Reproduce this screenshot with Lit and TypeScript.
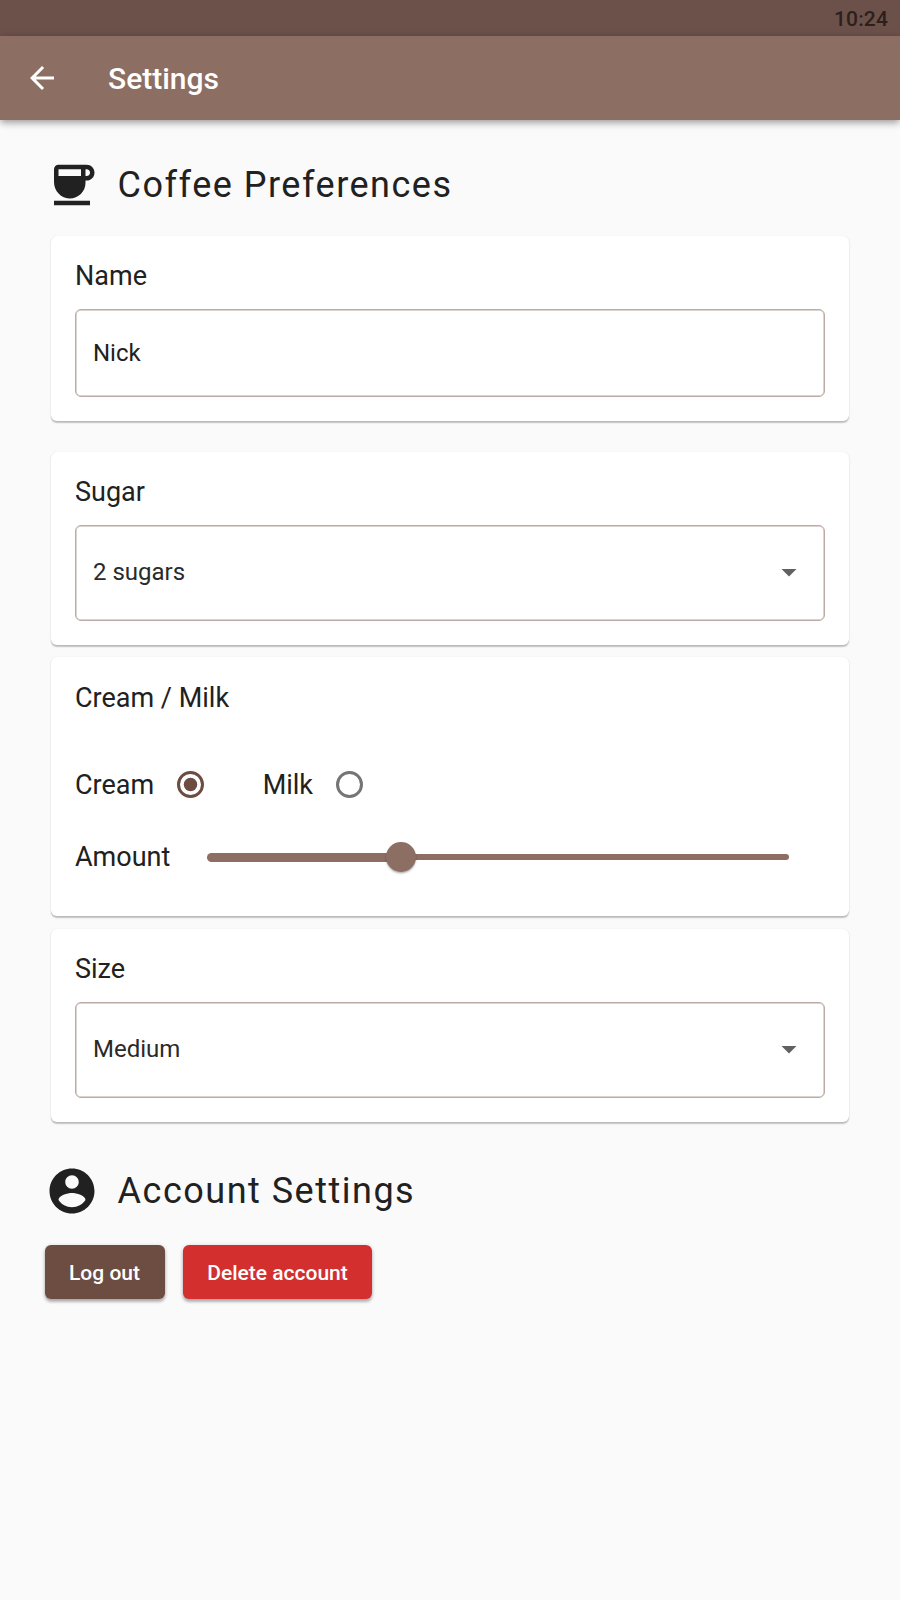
import { LitElement, html, css, svg } from "lit";
import { customElement, property, state } from "lit/decorators.js";

@customElement("select-box")
class SelectBox extends LitElement {
  @property() value = "";

  static styles = css`
    :host {
      display: flex;
      align-items: center;
      justify-content: space-between;
      height: 96px;
      padding: 0 18px;
      box-sizing: border-box;
      border-radius: 6px;
      border: 1px solid #bcaaa4;
      box-shadow: inset 0 0 0 0.5px #bcaaa4;
      font-size: 24px;
    }
    svg {
      width: 36px;
      height: 36px;
      fill: #616161;
      margin: -2px -1px 0 0;
    }
    .value {
      margin-left: -1px;
      color: #2a2a2a;
      line-height: 28px;
      margin-top: -2px;
    }
  `;

  render() {
    return html`<span class="value">${this.value}</span>
      <svg viewBox="0 0 24 24"><path d="M7 10l5 5 5-5z" /></svg>`;
  }
}

@customElement("radio-dot")
class RadioDot extends LitElement {
  @property({ type: Boolean }) checked = false;

  static styles = css`
    :host {
      display: block;
      width: 27px;
      height: 27px;
    }
    svg {
      display: block;
      width: 27px;
      height: 27px;
      fill: none;
      stroke: #757575;
      stroke-width: 3;
    }
    .on {
      stroke: #6d4c41;
    }
    .dot {
      fill: #6d4c41;
      stroke: none;
    }
  `;

  render() {
    return html`<svg class=${this.checked ? "on" : ""} viewBox="0 0 27 27">
      <circle cx="13.5" cy="13.5" r="12" />
      ${this.checked ? svg`<circle class="dot" cx="13.5" cy="13.5" r="6.75" />` : null}
    </svg>`;
  }
}

@customElement("app-root")
class AppRoot extends LitElement {
  @state() amount = 1 / 3;

  static styles = css`
    :host {
      display: flex;
      flex-direction: column;
      height: 1600px;
      background: #fafafa;
      color: #212121;
      font-family: Roboto, "Liberation Sans", sans-serif;
      box-sizing: border-box;
    }
    .status {
      height: 36px;
      flex: none;
      display: flex;
      align-items: center;
      justify-content: flex-end;
      padding: 2px 12px 0 0;
      box-sizing: border-box;
      background: #6b5149;
      color: #2b201d;
      font-size: 21px;
      font-weight: 500;
      letter-spacing: 0.15px;
    }
    .bar {
      height: 84px;
      flex: none;
      display: flex;
      align-items: center;
      padding-left: 24px;
      gap: 48px;
      background: #8d6e63;
      color: #fff;
      box-shadow: 0 3px 6px -1px rgba(0, 0, 0, 0.22), 0 4px 8px rgba(0, 0, 0, 0.12),
        0 1px 10px rgba(0, 0, 0, 0.1);
    }
    .bar svg {
      width: 36px;
      height: 36px;
      fill: #fff;
    }
    .bar .title {
      padding-top: 2px;
      font-size: 30px;
      font-weight: 500;
      line-height: 36px;
    }
    .heading {
      display: flex;
      align-items: center;
      gap: 18.6px;
      height: 54px;
      padding-left: 45px;
      font-size: 36px;
      letter-spacing: 1.5px;
      white-space: nowrap;
    }
    .heading svg {
      width: 54px;
      height: 54px;
      fill: #212121;
    }
    .coffee {
      margin-top: 37.5px;
    }
    .account {
      margin-top: 42px;
    }
    .card {
      margin: 0 51px;
      padding: 24px;
      box-sizing: border-box;
      border-radius: 6px;
      background: #fff;
      box-shadow: 0 1.5px 1.5px rgba(0, 0, 0, 0.22), 0 0.5px 1.5px rgba(0, 0, 0, 0.06);
      font-size: 27px;
    }
    .label {
      line-height: 32px;
      margin-bottom: 17px;
    }
    .name {
      margin-top: 24.5px;
      height: 185px;
    }
    .sugar {
      margin-top: 31px;
      height: 193px;
    }
    .milk {
      margin-top: 12px;
      padding-top: 25px;
      height: 259px;
    }
    .size {
      margin-top: 13px;
      height: 193px;
    }
    .field {
      display: flex;
      align-items: center;
      height: 88px;
      padding: 0 17px 1px;
      box-sizing: border-box;
      border: 1px solid #bcaaa4;
      border-radius: 6px;
      box-shadow: inset 0 0 0 0.5px #bcaaa4;
      font-size: 24px;
    }
    .choices {
      display: flex;
      align-items: center;
      height: 32px;
      margin-top: 54px;
    }
    .choices span {
      padding-top: 2px;
    }
    .choices radio-dot {
      margin-left: 23px;
    }
    .choices .second {
      margin-left: 58.5px;
    }
    .amount {
      display: flex;
      align-items: center;
      height: 32px;
      margin-top: 41px;
    }
    .slider {
      flex: none;
      width: 582px;
      height: 36px;
      margin-left: 37px;
      display: flex;
      align-items: center;
    }
    .filled {
      height: 9px;
      border-radius: 4.5px 0 0 4.5px;
      background: #8d6e63;
    }
    .rest {
      flex: 1;
      height: 6px;
      border-radius: 0 3px 3px 0;
      background: #8d6e63;
    }
    .thumb {
      flex: none;
      width: 30px;
      height: 30px;
      margin: 0 -15px;
      border-radius: 50%;
      background: #8d6e63;
      box-shadow: 0 1.5px 2px rgba(0, 0, 0, 0.3);
      z-index: 1;
    }
    .buttons {
      display: flex;
      gap: 18px;
      margin: 27px 0 0 45px;
    }
    button {
      height: 54px;
      padding: 2px 0 0;
      border: 0;
      border-radius: 6px;
      color: #fff;
      font: 500 21px Roboto, sans-serif;
      box-shadow: 0 3px 3px rgba(0, 0, 0, 0.22), 0 1px 4px rgba(0, 0, 0, 0.2);
    }
    .logout {
      width: 120px;
      padding-right: 1px;
      background: #6d4c41;
    }
    .delete {
      width: 189px;
      background: #d32f2f;
    }
  `;

  render() {
    return html`
      <div class="status"><span>10:24</span></div>
      <header class="bar">
        <svg viewBox="0 0 24 24">
          <path d="M20 11H7.83l5.59-5.59L12 4l-8 8 8 8 1.41-1.41L7.83 13H20v-2z" />
        </svg>
        <span class="title">Settings</span>
      </header>

      <div class="heading coffee">
        <svg viewBox="0 0 24 24">
          <path
            d="M18.5 3H6c-1.1 0-2 .9-2 2v5.71c0 3.83 2.95 7.18 6.78 7.29 3.96.12 7.22-3.06 7.22-7v-1h.5c1.93 0 3.5-1.57 3.5-3.5S20.43 3 18.5 3zM16 5v3H6V5h10zm2.5 3H18V5h.5c.83 0 1.5.67 1.5 1.5S19.33 8 18.5 8zM4 19h16v2H4v-2z"
          />
        </svg>
        <span>Coffee Preferences</span>
      </div>

      <section class="card name">
        <div class="label">Name</div>
        <div class="field">Nick</div>
      </section>
      <section class="card sugar">
        <div class="label">Sugar</div>
        <select-box value="2 sugars"></select-box>
      </section>
      <section class="card milk">
        <div class="label">Cream / Milk</div>
        <div class="choices">
          <span>Cream</span><radio-dot checked></radio-dot>
          <span class="second">Milk</span><radio-dot></radio-dot>
        </div>
        <div class="amount">
          <span>Amount</span>
          <div class="slider">
            <div class="filled" style="width:${this.amount * 100}%"></div>
            <div class="thumb"></div>
            <div class="rest"></div>
          </div>
        </div>
      </section>
      <section class="card size">
        <div class="label">Size</div>
        <select-box value="Medium"></select-box>
      </section>

      <div class="heading account">
        <svg viewBox="0 0 24 24">
          <path
            d="M12 2C6.48 2 2 6.48 2 12s4.48 10 10 10 10-4.48 10-10S17.52 2 12 2zm0 3c1.66 0 3 1.34 3 3s-1.34 3-3 3-3-1.34-3-3 1.34-3 3-3zm0 14.2c-2.5 0-4.71-1.28-6-3.22.03-1.99 4-3.08 6-3.08 1.99 0 5.97 1.09 6 3.08-1.29 1.94-3.5 3.22-6 3.22z"
          />
        </svg>
        <span>Account Settings</span>
      </div>
      <div class="buttons">
        <button class="logout">Log out</button>
        <button class="delete">Delete account</button>
      </div>
    `;
  }
}
